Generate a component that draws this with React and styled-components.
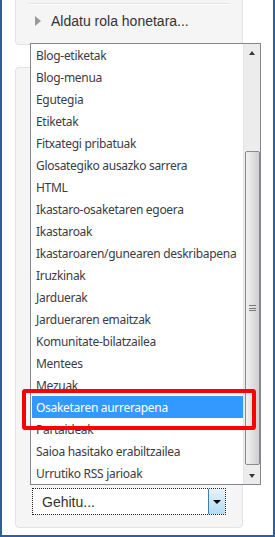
import React from "react";
import styled, { createGlobalStyle } from "styled-components";

const Global = createGlobalStyle`
  html, body { margin: 0; padding: 0; background: #fff; }
  body { width: 275px; height: 537px; overflow: hidden; }
  * { box-sizing: border-box; }
`;

const Frame = styled.div`
  width: 275px;
  height: 537px;
  border-left: 2px solid #2c5f9c;
  border-right: 2px solid #2c5f9c;
  border-bottom: 2px solid #2c5f9c;
  background: #fff;
  padding-left: 13px;
  display: flex;
  flex-direction: column;
  font-family: "Liberation Sans", Arial, sans-serif;
`;

const TopPanel = styled.div`
  width: 228px;
  height: 45px;
  background: #f5f5f5;
  border: 1px solid #e3e3e3;
  border-top: none;
  border-radius: 0 0 4px 4px;
  padding: 3px 13px 0;
`;

const Divider = styled.div`
  height: 2px;
  border-top: 1px solid #e2e2e2;
  border-bottom: 1px solid #fff;
`;

const Toggle = styled.div`
  display: flex;
  align-items: center;
  gap: 10px;
  margin-top: 7px;
  padding-left: 6px;
  font-size: 14px;
  color: #333;
  height: 18px;
`;

const Caret = styled.span`
  width: 0;
  height: 0;
  border-top: 5.5px solid transparent;
  border-bottom: 5.5px solid transparent;
  border-left: 6px solid #999;
`;

const BlockPanel = styled.div`
  width: 228px;
  margin-top: 22px;
  height: 461px;
  background: #f5f5f5;
  border: 1px solid #e3e3e3;
  border-radius: 4px;
  display: flex;
  flex-direction: column;
  justify-content: flex-end;
  padding: 0 16px 12px;
`;

const SelectWrap = styled.div`
  position: relative;
  width: 194px;
  height: 27px;
`;

const SelectBox = styled.div`
  height: 27px;
  border: 1px dotted #222;
  background: #fff;
  display: flex;
  align-items: center;
  justify-content: space-between;
  padding-left: 9px;
  font-size: 14px;
  color: #333;
`;

const SelectButton = styled.div`
  width: 17px;
  height: 100%;
  border-left: 1px solid #3c7fb1;
  background: linear-gradient(#e5f4fc, #b2daf3);
  display: flex;
  align-items: center;
  justify-content: center;
`;

const DownTri = styled.span`
  width: 0;
  height: 0;
  border-left: 4px solid transparent;
  border-right: 4px solid transparent;
  border-top: 4px solid #000;
`;

const ListPopup = styled.div`
  position: absolute;
  left: -2px;
  bottom: calc(100% + 3px);
  width: 231px;
  height: 442px;
  border: 1px solid #828790;
  background: #fff;
  display: flex;
  font-family: "Noto Sans", "Open Sans", sans-serif;
`;

const Items = styled.ul`
  list-style: none;
  margin: 0;
  padding: 0;
  width: 212px;
  display: flex;
  flex-direction: column;
`;

const Item = styled.li`
  height: 22px;
  display: flex;
  align-items: center;
  padding-left: 4px;
  margin: 0 0 0 1px;
  font-size: 12px;
  letter-spacing: -0.3px;
  color: ${(p) => (p.$active ? "#fff" : "#3b3b45")};
  background: ${(p) => (p.$active ? "#3399ff" : "transparent")};
  white-space: nowrap;
`;

const Scrollbar = styled.div`
  width: 17px;
  display: flex;
  flex-direction: column;
  background: #ececec;
  border-left: 1px solid #e4e4e4;
`;

const ArrowBtn = styled.div`
  height: 17px;
  display: flex;
  align-items: center;
  justify-content: center;
`;

const UpTri = styled.span`
  width: 0;
  height: 0;
  border-left: 3.5px solid transparent;
  border-right: 3.5px solid transparent;
  border-bottom: 4px solid #3a3a3a;
`;

const SmallDown = styled.span`
  width: 0;
  height: 0;
  border-left: 3.5px solid transparent;
  border-right: 3.5px solid transparent;
  border-top: 4px solid #3a3a3a;
`;

const Track = styled.div`
  flex: 1;
  padding-top: 90px;
  display: flex;
  justify-content: center;
`;

const Thumb = styled.div`
  width: 15px;
  height: 314px;
  border: 1px solid #8b8b8b;
  border-radius: 2px;
  background: linear-gradient(to right, #f2f2f2, #e2e2e2 45%, #cfcfcf);
  display: flex;
  align-items: center;
  justify-content: center;
`;

const Grip = styled.div`
  width: 7px;
  height: 6px;
  border-top: 1px solid #777;
  border-bottom: 1px solid #777;
  position: relative;
  &::after {
    content: "";
    position: absolute;
    left: 0;
    right: 0;
    top: 1.5px;
    border-top: 1px solid #777;
  }
`;

const Highlight = styled.div`
  position: absolute;
  left: -9px;
  top: 345px;
  width: 234px;
  height: 41px;
  border: 4px solid #ff0000;
  border-radius: 3px;
  pointer-events: none;
`;

const items = [
  "Blog-etiketak",
  "Blog-menua",
  "Egutegia",
  "Etiketak",
  "Fitxategi pribatuak",
  "Glosategiko ausazko sarrera",
  "HTML",
  "Ikastaro-osaketaren egoera",
  "Ikastaroak",
  "Ikastaroaren/gunearen deskribapena",
  "Iruzkinak",
  "Jarduerak",
  "Jardueraren emaitzak",
  "Komunitate-bilatzailea",
  "Mentees",
  "Mezuak",
  "Osaketaren aurrerapena",
  "Partaideak",
  "Saioa hasitako erabiltzailea",
  "Urrutiko RSS jarioak",
];

export default function App() {
  return (
    <>
      <Global />
      <Frame>
        <TopPanel>
          <Divider />
          <Toggle>
            <Caret />
            <span>Aldatu rola honetara...</span>
          </Toggle>
        </TopPanel>
        <BlockPanel>
          <SelectWrap>
            <SelectBox>
              <span>Gehitu...</span>
              <SelectButton>
                <DownTri />
              </SelectButton>
            </SelectBox>
            <ListPopup>
              <Items>
                {items.map((t) => (
                  <Item key={t} $active={t === "Osaketaren aurrerapena"}>
                    {t}
                  </Item>
                ))}
              </Items>
              <Scrollbar>
                <ArrowBtn>
                  <UpTri />
                </ArrowBtn>
                <Track>
                  <Thumb>
                    <Grip />
                  </Thumb>
                </Track>
                <ArrowBtn>
                  <SmallDown />
                </ArrowBtn>
              </Scrollbar>
              <Highlight />
            </ListPopup>
          </SelectWrap>
        </BlockPanel>
      </Frame>
    </>
  );
}
